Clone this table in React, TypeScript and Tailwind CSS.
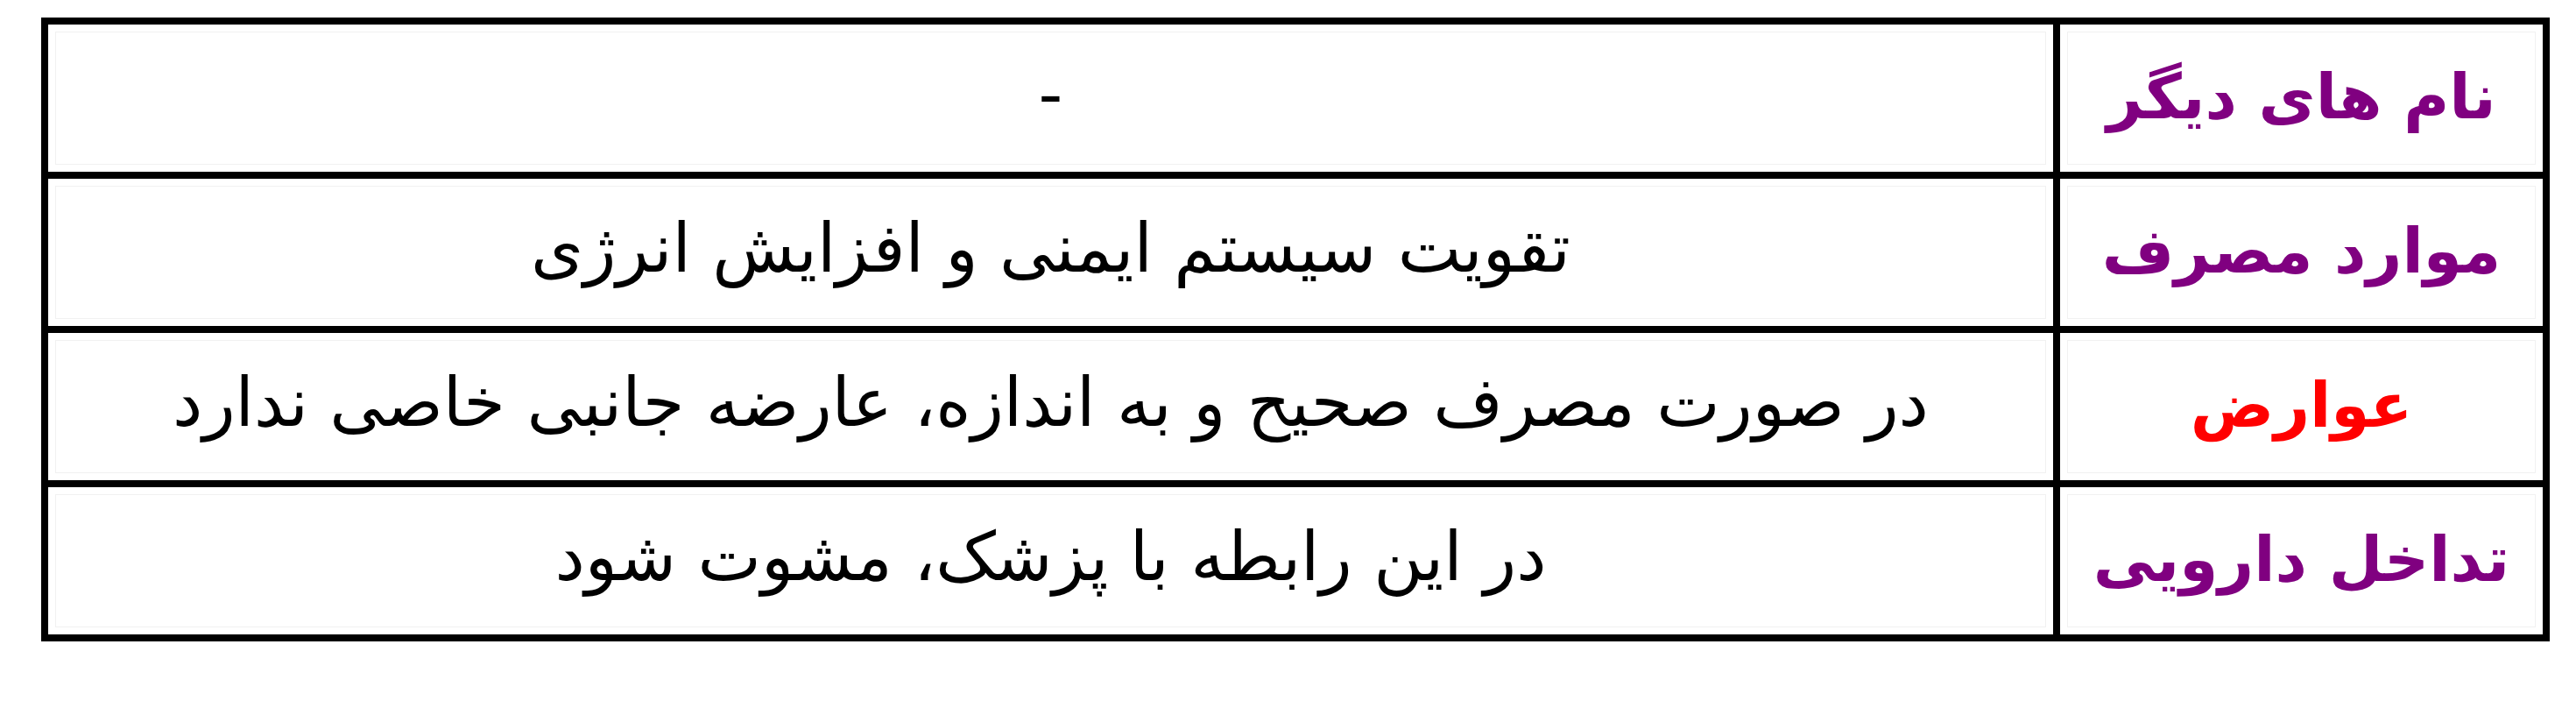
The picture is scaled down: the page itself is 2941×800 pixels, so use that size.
import React from "react";

const rows: { label: string; labelColor: string; value: string }[] = [
  { label: "نام های دیگر", labelColor: "text-[#800080]", value: "-" },
  { label: "موارد مصرف", labelColor: "text-[#800080]", value: "تقویت سیستم ایمنی و افزایش انرژی" },
  { label: "عوارض", labelColor: "text-[#ff0000]", value: "در صورت مصرف صحیح و به اندازه، عارضه جانبی خاصی ندارد" },
  { label: "تداخل دارویی", labelColor: "text-[#800080]", value: "در این رابطه با پزشک، مشوت شود" },
];

export default function App() {
  return (
    <div className="w-[2941px] h-[800px] bg-white pt-[20px] pl-[47px]" style={{ fontFamily: '"DejaVu Sans", sans-serif' }}>
      <div dir="rtl" className="w-[2864px] border-[8px] border-black flex flex-col bg-white">
        {rows.map((r, i) => (
          <div key={i} className={`flex h-[168px] box-content ${i > 0 ? "border-t-[8px] border-black" : ""}`}>
            <div className="w-[559px] shrink-0 border-l-[8px] border-black box-border p-[8px]">
              <div className="h-full border border-[#f1f1f1] flex items-center justify-center pb-[4px]">
                <span className={`${r.labelColor} text-[71px] font-bold leading-none`}>{r.label}</span>
              </div>
            </div>
            <div className="flex-1 min-w-0 p-[8px]">
              <div className="h-full border border-[#f1f1f1] flex items-center justify-center pb-[10px]">
                <span className="text-black text-[77px] leading-none whitespace-nowrap">{r.value}</span>
              </div>
            </div>
          </div>
        ))}
      </div>
    </div>
  );
}
